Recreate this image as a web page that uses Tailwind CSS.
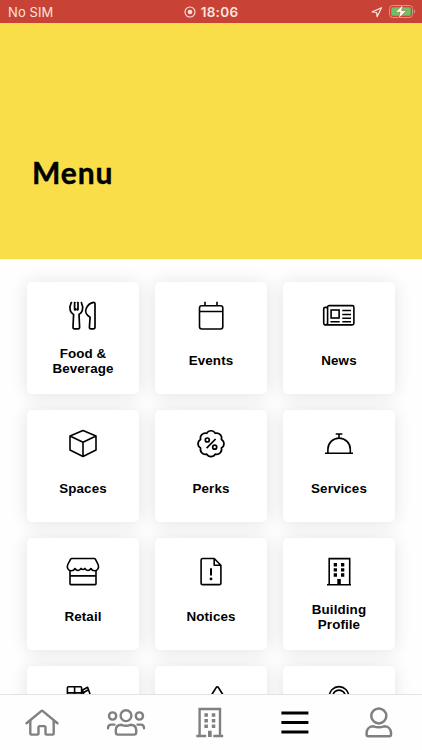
<!DOCTYPE html>
<html lang="en">

<head>
    <meta charset="UTF-8">
    <meta name="viewport" content="width=device-width, initial-scale=1.0">
    <title>Menu</title>
    <script src="https://cdn.jsdelivr.net/npm/@tailwindcss/browser@4"></script>
</head>

<body class="bg-[#fefefe] h-screen overflow-hidden flex flex-col text-black font-['Liberation_Sans',sans-serif]">

    <!-- Status bar -->
    <div class="h-[23px] shrink-0 bg-[#c94236] text-[#fbe4df] grid grid-cols-3 items-center pl-2 pr-[6px] font-['Inter',sans-serif]">
        <span class="text-[13px] leading-none tracking-[0.1px] pt-px">No SIM</span>
        <div class="flex items-center justify-center gap-[5px] pr-[2px]">
            <svg class="size-3" viewBox="0 0 12 12" fill="none" stroke="currentColor">
                <circle cx="6" cy="6" r="5" stroke-width="1.1" />
                <circle cx="6" cy="6" r="2.3" fill="currentColor" stroke="none" />
            </svg>
            <span class="text-[13.5px] leading-none font-semibold tracking-[0.3px] pt-[2px]">18:06</span>
        </div>
        <div class="flex items-center justify-end gap-[5px]">
            <svg class="size-3" viewBox="0 0 12 12" fill="none" stroke="currentColor" stroke-width="1.2" stroke-linejoin="round">
                <path d="M10.5 1.7 1.3 5.9l4.3.6.5 4.2z" />
            </svg>
            <svg class="w-[28px] h-[15px]" viewBox="0 0 28 15">
                <rect x="1.5" y="1.5" width="23" height="12" rx="3.2" fill="none" stroke="#e3958a" />
                <rect x="3.2" y="3.2" width="19.6" height="8.6" rx="1.8" fill="#68c466" />
                <path d="M26 5.6c1.6.6 1.6 3.2 0 3.8z" fill="#e3958a" />
                <path d="M15 .8 7.4 8.2h4.8l-1.7 6.1 8-7.6h-4.9z" fill="#fff" stroke="#c94236" stroke-width=".5" />
            </svg>
        </div>
    </div>

    <!-- Header -->
    <header class="h-[236px] shrink-0 bg-[#f9de4a] pl-8 pt-[131px]">
        <h1 class="text-[30px] leading-9 font-bold tracking-[0.9px] [-webkit-text-stroke:0.4px_black] font-['Lato',sans-serif]">Menu</h1>
    </header>

    <!-- Menu grid -->
    <main class="flex-1 min-h-0 overflow-hidden pl-[27px] pt-[23px]">
        <div class="grid grid-cols-[repeat(3,112px)] auto-rows-[112px] gap-4 text-[13.4px] leading-[14.5px] font-bold text-center tracking-[0.1px]">

            <a href="#" class="bg-white rounded-[5px] shadow-[0_1px_18px_rgba(0,0,0,0.11)] flex flex-col items-center pt-4">
                <svg class="size-9 shrink-0" viewBox="0 0 36 36" fill="none" stroke="currentColor" stroke-width="1.7" stroke-linecap="round" stroke-linejoin="round">
                    <path d="M6.200 4.600C4.800 7.500 4.600 10 5.300 12.500c.5 1.800 1.500 3.100 3.300 4L8 29c-.1 1.200.5 1.800 1.500 1.800h3.600c1 0 1.600-.6 1.500-1.800L14 16.500c1.800-.9 2.800-2.200 3.300-4 .7-2.500.5-5-.9-7.900M9.600 4.600v6.600c0 1 .9 1 .9 0M13 4.600v6.600c0 1-.9 1-.9 0M6.200 4.600h.3M9.600 4.600l.4 0M13 4.600h-.4" />
                    <path d="M30 6v23c0 1.200-.6 1.800-1.600 1.800h-2.500c-1 0-1.600-.6-1.500-1.800l.7-9.800c-4-2-5.200-5.600-3.900-8.700 1.500-3.400 4.300-5.600 7.400-6.100.9-.1 1.400.5 1.400 1.600z" />
                </svg>
                <span class="h-[52px] flex items-center pt-[3px]">Food &amp;<br>Beverage</span>
            </a>

            <a href="#" class="bg-white rounded-[5px] shadow-[0_1px_18px_rgba(0,0,0,0.11)] flex flex-col items-center pt-4">
                <svg class="size-9 shrink-0" viewBox="0 0 36 36" fill="none" stroke="currentColor" stroke-width="1.6">
                    <rect x="6.500" y="7.700" width="23.300" height="23.300" rx="2.200" />
                    <path d="M6.500 13.500h23.300M12 3.700v4M24 3.700v4" />
                </svg>
                <span class="h-[52px] flex items-center pt-[3px]">Events</span>
            </a>

            <a href="#" class="bg-white rounded-[5px] shadow-[0_1px_18px_rgba(0,0,0,0.11)] flex flex-col items-center pt-4">
                <svg class="size-9 shrink-0" viewBox="0 0 36 36" fill="none" stroke="currentColor" stroke-width="1.600">
                    <path d="M6.600 25V9.200c0-1 .6-1.600 1.500-1.600h23.200c1 0 1.600.6 1.600 1.600v16.100c0 1-.6 1.600-1.600 1.600H4.700c-1.200 0-2-.8-2-2V11c0-1 .6-1.600 1.600-1.600h2.300M6.600 24.500c0 1.500-.6 2.400-1.800 2.400" />
                    <rect x="10.100" y="12" width="8" height="8" />
                    <path d="M21.300 12.500H30M21.300 16.400H30M21.300 20.200H30M9.400 23.800h9.300M21.300 23.800H30" stroke-width="1.500" />
                </svg>
                <span class="h-[52px] flex items-center pt-[3px]">News</span>
            </a>

            <a href="#" class="bg-white rounded-[5px] shadow-[0_1px_18px_rgba(0,0,0,0.11)] flex flex-col items-center pt-4">
                <svg class="size-9 shrink-0" viewBox="0 0 36 36" fill="none" stroke="currentColor" stroke-width="1.600" stroke-linejoin="round">
                    <path d="M18 4.600 31 10v14l-13 6.500L5 24V10zM5 10l13 6.300L31 10M18 16.300v14.200" />
                </svg>
                <span class="h-[52px] flex items-center pt-[3px]">Spaces</span>
            </a>

            <a href="#" class="bg-white rounded-[5px] shadow-[0_1px_18px_rgba(0,0,0,0.11)] flex flex-col items-center pt-4">
                <svg class="size-9 shrink-0" viewBox="0 0 36 36" fill="none" stroke="currentColor" stroke-width="1.700" stroke-linejoin="round">
                    <path d="M13.700 7.300a4.900 4.900 0 0 1 8.600 0a4.900 4.900 0 0 1 6.100 6.100a4.900 4.900 0 0 1 0 8.600a4.900 4.900 0 0 1-6.100 6.100a4.900 4.900 0 0 1-8.600 0a4.900 4.900 0 0 1-6.100-6.100a4.900 4.900 0 0 1 0-8.600a4.900 4.900 0 0 1 6.100-6.100z" />
                    <circle cx="14.300" cy="14" r="2" />
                    <circle cx="21.700" cy="21.200" r="2" />
                    <path d="M13.600 22.200l9-9.200" />
                </svg>
                <span class="h-[52px] flex items-center pt-[3px]">Perks</span>
            </a>

            <a href="#" class="bg-white rounded-[5px] shadow-[0_1px_18px_rgba(0,0,0,0.11)] flex flex-col items-center pt-4">
                <svg class="size-9 shrink-0" viewBox="0 0 36 36" fill="none" stroke="currentColor" stroke-width="1.600">
                    <path d="M4 27.300h28M6.900 27.300v-4a11.200 11.200 0 0 1 22.400 0v4M14.700 8h6.700M18 8v4" />
                </svg>
                <span class="h-[52px] flex items-center pt-[3px]">Services</span>
            </a>

            <a href="#" class="bg-white rounded-[5px] shadow-[0_1px_18px_rgba(0,0,0,0.11)] flex flex-col items-center pt-4">
                <svg class="size-9 shrink-0" viewBox="0 0 36 36" fill="none" stroke="currentColor" stroke-width="1.600" stroke-linejoin="round">
                    <path d="M6.800 4.500h22.400c.6 0 1 .3 1.300.8l2.600 5.200c1.400 3.300-.6 6.300-3.500 6.300-1.700 0-2.900-.8-3.700-2.300-1.600 2.600-4.500 2.600-6-.1-.9 1.500-3 1.500-3.900 0-1.500 2.700-4.400 2.700-6 .1-.8 1.500-2 2.300-3.700 2.300-2.900 0-5-3-3.500-6.300l2.700-5.200c.3-.5.700-.8 1.300-.8z" />
                    <path d="M5 16.500v13.200c0 .6.300.9.900.9h24.200c.6 0 .9-.3.900-.9V16.500M5 21.900h26" />
                </svg>
                <span class="h-[52px] flex items-center pt-[3px]">Retail</span>
            </a>

            <a href="#" class="bg-white rounded-[5px] shadow-[0_1px_18px_rgba(0,0,0,0.11)] flex flex-col items-center pt-4">
                <svg class="size-9 shrink-0" viewBox="0 0 36 36" fill="none" stroke="currentColor" stroke-width="1.600" stroke-linejoin="round">
                    <path d="M21.200 4.500H9.800c-1 0-1.700.7-1.700 1.700v22.700c0 1 .7 1.700 1.700 1.700h16.400c1 0 1.700-.7 1.700-1.700V11.200zM21.200 4.500v6.700h6.700" />
                    <path d="M18 14.300v7.200" stroke-width="2" />
                    <circle cx="18" cy="24.900" r="1.400" fill="currentColor" stroke="none" />
                </svg>
                <span class="h-[52px] flex items-center pt-[3px]">Notices</span>
            </a>

            <a href="#" class="bg-white rounded-[5px] shadow-[0_1px_18px_rgba(0,0,0,0.11)] flex flex-col items-center pt-4">
                <svg class="size-9 shrink-0" viewBox="0 0 36 36" fill="none" stroke="currentColor" stroke-width="1.600">
                    <path d="M8.200 30.700V4.600h20.500v26.100M6 30.700h24" />
                    <path d="M12.700 9H16v3.400h-3.300zM20 9h3.300v3.400H20zM12.700 14.200H16v3.400h-3.300zM20 14.200h3.300v3.400H20zM12.700 19.300H16v3.400h-3.300zM20 19.300h3.300v3.400H20zM16.300 25h3.500v5.700h-3.500z" fill="currentColor" stroke="none" />
                </svg>
                <span class="h-[52px] flex items-center pt-[3px]">Building<br>Profile</span>
            </a>

            <!-- Last row runs under the tab bar -->
            <a href="#" class="bg-white rounded-[5px] shadow-[0_1px_18px_rgba(0,0,0,0.11)] flex flex-col items-center pt-4">
                <svg class="size-9 shrink-0" viewBox="0 0 36 36" fill="none" stroke="currentColor" stroke-width="1.600" stroke-linejoin="round">
                    <path d="M2.400 31V5.800c0-.6.300-1 1-1h12.200c.6 0 1 .4 1 1V31M9.600 4.800V31M2.400 10.900h14.200M17.200 8.300l5.400-3L31 29l-5 2zM17.700 11l5.400-3" />
                </svg>
            </a>

            <a href="#" class="bg-white rounded-[5px] shadow-[0_1px_18px_rgba(0,0,0,0.11)] flex flex-col items-center pt-4">
                <svg class="size-9 shrink-0" viewBox="0 0 36 36" fill="none" stroke="currentColor" stroke-width="1.700" stroke-linejoin="round">
                    <path d="M18.500 13l4.800-7.600c.5-.8 1.500-.8 2 0l4.800 7.600" />
                </svg>
            </a>

            <a href="#" class="bg-white rounded-[5px] shadow-[0_1px_18px_rgba(0,0,0,0.11)] flex flex-col items-center pt-4">
                <svg class="size-9 shrink-0" viewBox="0 0 36 36" fill="none" stroke="currentColor" stroke-width="1.600">
                    <circle cx="18" cy="14.300" r="9.700" />
                    <circle cx="18" cy="14.300" r="6.200" />
                </svg>
            </a>
        </div>
    </main>

    <!-- Tab bar -->
    <nav class="relative h-[56px] shrink-0 bg-[#fefefe] border-t border-[#e2e2e2] grid grid-cols-5 justify-items-center pt-[7px] pr-px text-[#808080]">
        <a href="#">
            <svg class="size-10" viewBox="0 0 40 40" fill="none" stroke="currentColor" stroke-width="2.400" stroke-linecap="round" stroke-linejoin="round">
                <path d="M4.500 21.200 19.200 9.100c.5-.4 1.100-.4 1.600 0l14.700 12.100" />
                <path d="M8.300 19v12.300c0 .9.500 1.300 1.300 1.300h5.600c.8 0 1.300-.4 1.300-1.300v-5.900c0-.8.400-1.300 1.300-1.300h4.400c.9 0 1.300.5 1.300 1.300v5.900c0 .9.500 1.300 1.300 1.300h5.600c.8 0 1.300-.4 1.300-1.300V19" />
            </svg>
        </a>
        <a href="#">
            <svg class="size-10" viewBox="0 0 40 40" fill="none" stroke="currentColor" stroke-width="2.400" stroke-linecap="round" stroke-linejoin="round">
                <circle cx="20" cy="13.700" r="5.400" />
                <circle cx="6.600" cy="14" r="3.600" />
                <circle cx="33.400" cy="14" r="3.600" />
                <path d="M15.500 22.800c3 1.300 6 1.300 9 0 3.500 0 5.500 2 5.700 5v2.400c0 1.500-.8 2.400-2.300 2.400H12.100c-1.500 0-2.300-.9-2.300-2.400v-2.400c.2-3 2.200-5 5.700-5z" />
                <path d="M2 26.200c0-2.300 1.200-3.600 3.300-3.600h3.200M38 26.200c0-2.300-1.200-3.600-3.300-3.600h-3.200" />
            </svg>
        </a>
        <a href="#">
            <svg class="size-10" viewBox="0 0 40 40" fill="none" stroke="currentColor" stroke-width="2.400">
                <path d="M9.600 34V7h20.400v27M6.300 34h9.900M23.300 34h9.900" />
                <path d="M14.400 11.300h3.500v3.400h-3.500zM21.800 11.300h3.500v3.400h-3.500zM14.400 17h3.500v3.400h-3.500zM21.800 17h3.500v3.400h-3.500zM14.400 22.600h3.500V26h-3.500zM21.800 22.600h3.500V26h-3.500zM18 28.800h3.700v6.200H18z" fill="currentColor" stroke="none" />
            </svg>
        </a>
        <a href="#" class="text-black">
            <svg class="size-10" viewBox="0 0 40 40" fill="none" stroke="currentColor" stroke-width="3">
                <path d="M6.400 11h27M6.400 20.500h27M6.400 30h27" />
            </svg>
        </a>
        <a href="#">
            <svg class="size-10" viewBox="0 0 40 40" fill="none" stroke="currentColor" stroke-width="2.500" stroke-linejoin="round">
                <circle cx="19.800" cy="13.900" r="7.500" />
                <path d="M14.500 24.300c3.600 1.400 7 1.400 10.600 0 4.100 0 6.700 2.700 6.900 6.500v1.600c0 1.200-.6 1.800-1.800 1.800H9.400c-1.200 0-1.800-.6-1.800-1.800v-1.600c.2-3.800 2.800-6.500 6.900-6.500z" />
            </svg>
        </a>
    </nav>

</body>

</html>
